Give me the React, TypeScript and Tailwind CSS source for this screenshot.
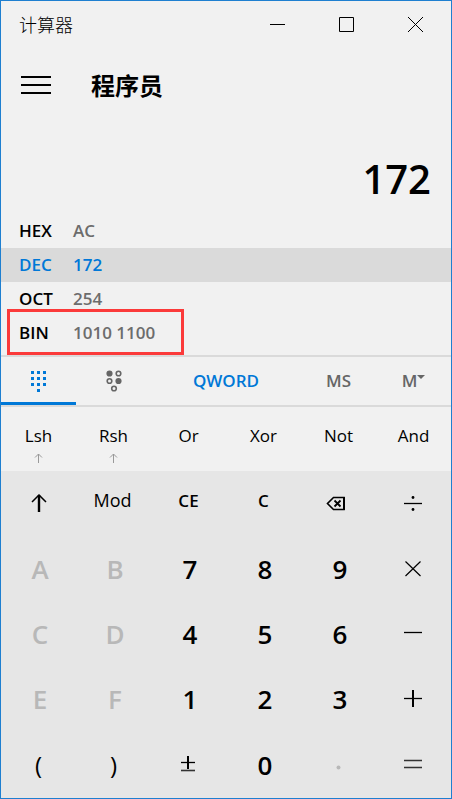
import type { ReactNode } from "react";

const SHIFTED = (
  <svg width="9" height="10" viewBox="0 0 9 10" fill="none" stroke="#999999" aria-hidden="true">
    <path d="M4.5 1v9M1 4.5l3.5-3.5 3.5 3.5" />
  </svg>
);

const RADIX = [
  { name: "HEX", value: "AC" },
  { name: "DEC", value: "172", active: true },
  { name: "OCT", value: "254" },
  { name: "BIN", value: "1010 1100", marked: true },
];

const BITWISE = [
  { name: "Lsh", shifted: true },
  { name: "Rsh", shifted: true },
  { name: "Or" },
  { name: "Xor" },
  { name: "Not" },
  { name: "And" },
];

type Key = { name: string; kind: "digit" | "off" | "command" | "word" | "paren" | "icon"; icon?: ReactNode };

function Icon({ children }: { children: ReactNode }) {
  return (
    <svg width="20" height="20" viewBox="0 0 20 20" fill="none" stroke="#000000" aria-hidden="true">
      {children}
    </svg>
  );
}

const ICONS: Record<string, ReactNode> = {
  Shift: (
    <Icon>
      <path d="M11 1v17" strokeWidth="2.4" />
      <path d="M4 8l7-7 7 7" strokeWidth="1.5" />
    </Icon>
  ),
  Backspace: (
    <svg width="24" height="20" viewBox="0 0 24 20" fill="none" stroke="#000000" aria-hidden="true">
      <path d="M7.5 3.5h10.5v12H7.5l-6-6z" strokeWidth="1.6" />
      <path d="M18 3v13" strokeWidth="2" />
      <path d="M8.5 6.5l6 6M14.5 6.5l-6 6" strokeWidth="1.8" />
    </svg>
  ),
  Divide: (
    <Icon>
      <path d="M1 9.5h18" strokeWidth="1.3" />
      <circle cx="10" cy="3.5" r="1.4" fill="#000000" stroke="none" />
      <circle cx="10" cy="15.5" r="1.4" fill="#000000" stroke="none" />
    </Icon>
  ),
  Multiply: (
    <Icon>
      <path d="M2.5 2.5l15 14.5M17.5 2.5L2.5 17" strokeWidth="1.2" />
    </Icon>
  ),
  Minus: (
    <Icon>
      <path d="M1 8.5h18" strokeWidth="1.3" />
    </Icon>
  ),
  Plus: (
    <Icon>
      <path d="M1 8.5h18" strokeWidth="1.3" />
      <path d="M10 0v17" strokeWidth="2" />
    </Icon>
  ),
  Equals: (
    <Icon>
      <path d="M1 5.5h18M1 12.5h18" stroke="#333333" strokeWidth="1.5" />
    </Icon>
  ),
  Negate: (
    <Icon>
      <path d="M3 7.5h14" strokeWidth="1.3" />
      <path d="M10 1v13" strokeWidth="2" />
      <path d="M3 15.5h14" stroke="#333333" strokeWidth="1.6" />
    </Icon>
  ),
  Decimal: (
    <Icon>
      <circle cx="10.5" cy="12.5" r="2" fill="#b8b8b8" stroke="none" />
    </Icon>
  ),
};

const KEYS: Key[] = [
  { name: "Shift", kind: "icon" },
  { name: "Mod", kind: "word" },
  { name: "CE", kind: "command" },
  { name: "C", kind: "command" },
  { name: "Backspace", kind: "icon" },
  { name: "Divide", kind: "icon" },
  { name: "A", kind: "off" },
  { name: "B", kind: "off" },
  { name: "7", kind: "digit" },
  { name: "8", kind: "digit" },
  { name: "9", kind: "digit" },
  { name: "Multiply", kind: "icon" },
  { name: "C", kind: "off" },
  { name: "D", kind: "off" },
  { name: "4", kind: "digit" },
  { name: "5", kind: "digit" },
  { name: "6", kind: "digit" },
  { name: "Minus", kind: "icon" },
  { name: "E", kind: "off" },
  { name: "F", kind: "off" },
  { name: "1", kind: "digit" },
  { name: "2", kind: "digit" },
  { name: "3", kind: "digit" },
  { name: "Plus", kind: "icon" },
  { name: "(", kind: "paren" },
  { name: ")", kind: "paren" },
  { name: "Negate", kind: "icon" },
  { name: "0", kind: "digit" },
  { name: "Decimal", kind: "icon" },
  { name: "Equals", kind: "icon" },
];

const KEY_STYLE = {
  digit: "pl-[3px] text-[26px] font-semibold text-black",
  off: "pl-[3px] text-[26px] font-semibold text-[#b8b8b8]",
  command: "pb-1.5 text-[17px] font-semibold text-black",
  word: "pr-0.5 pb-1.5 text-[18px] text-black",
  paren: "text-[24px] text-black",
  icon: "pr-0.5",
};

function TitleBar() {
  return (
    <header className="flex h-[46px] items-center pr-px pl-[18px]">
      <h1 className="flex-1 font-['Noto_Sans_CJK_SC',sans-serif] text-[18px] font-light">计算器</h1>
      <button type="button" aria-label="最小化" className="flex h-full w-[69px] items-center justify-center">
        <svg width="15" height="15" viewBox="0 0 15 15" stroke="#000000" aria-hidden="true">
          <path d="M0 7.5h15" />
        </svg>
      </button>
      <button type="button" aria-label="最大化" className="flex h-full w-[69px] items-center justify-center">
        <svg width="15" height="15" viewBox="0 0 15 15" fill="none" stroke="#000000" aria-hidden="true">
          <path d="M.5.5h14v14H.5z" />
        </svg>
      </button>
      <button type="button" aria-label="关闭" className="flex h-full w-[69px] items-center justify-center">
        <svg width="15" height="15" viewBox="0 0 15 15" stroke="#000000" aria-hidden="true">
          <path d="M0 0l15 15M15 0L0 15" />
        </svg>
      </button>
    </header>
  );
}

export default function App() {
  return (
    <main className="flex min-h-screen flex-col border border-[#1e7fd0] bg-[#f1f1f1] font-['Open_Sans','Noto_Sans','Noto_Sans_CJK_SC',sans-serif] text-black">
      <TitleBar />

      <div className="flex h-[76px] items-center gap-10 pl-5">
        <button type="button" aria-label="菜单">
          <svg width="30" height="20" viewBox="0 0 30 20" stroke="#000000" strokeWidth="2" aria-hidden="true">
            <path d="M0 2h30M0 10h30M0 18h30" />
          </svg>
        </button>
        <h2 className="font-['Noto_Sans_CJK_SC',sans-serif] text-[24px] font-bold">程序员</h2>
      </div>

      <output className="flex h-[91px] items-center justify-end px-5 pt-5 text-[40px] font-semibold">172</output>

      <div className="flex flex-col pb-[5px]">
        {RADIX.map((row) => (
          <button
            key={row.name}
            type="button"
            aria-pressed={!!row.active}
            className={`relative flex h-[34px] items-center pl-[18px] text-left text-[17px] font-semibold ${
              row.active ? "bg-[#dadada] text-[#0078d7]" : ""
            }`}
          >
            <span className="w-[54px]">{row.name}</span>
            <span className={row.active ? "" : "text-[#6c6c6c]"}>{row.value}</span>
            {row.marked && (
              <span className="absolute -bottom-[5px] left-[6px] h-[46px] w-[177px] border-3 border-[#fb3a3a]" />
            )}
          </button>
        ))}
      </div>

      <div className="grid h-[52px] grid-cols-6 border-y-2 border-[#dadada] text-[17px] font-semibold">
        <button type="button" aria-label="键盘" className="flex items-center justify-center border-b-3 border-[#0078d7] pt-1">
          <svg width="15" height="21" viewBox="0 0 15 21" fill="#0078d7" aria-hidden="true">
            <path d="M0 0h3v3H0zM6 0h3v3H6zM12 0h3v3h-3zM0 6h3v3H0zM6 6h3v3H6zM12 6h3v3h-3zM0 12h3v3H0zM6 12h3v3H6zM12 12h3v3h-3zM6 18h3v3H6z" />
          </svg>
        </button>
        <button type="button" aria-label="位切换" className="flex items-center justify-center">
          <svg width="16" height="22" viewBox="0 0 16 22" fill="none" stroke="#666666" strokeWidth="1.6" aria-hidden="true">
            <circle cx="3.5" cy="3.5" r="2.3" fill="#666666" />
            <circle cx="12.5" cy="3.5" r="2.3" />
            <circle cx="3.5" cy="11" r="2.3" />
            <circle cx="12.5" cy="11" r="2.3" fill="#666666" />
            <circle cx="8" cy="18.5" r="2.3" />
          </svg>
        </button>
        <button type="button" className="col-span-2 text-[#0078d7]">
          QWORD
        </button>
        <button type="button" className="text-[#666666]">
          MS
        </button>
        <button type="button" className="flex items-center justify-center text-[#666666]">
          M
          <svg width="8" height="14" viewBox="0 0 8 14" fill="#666666" aria-hidden="true">
            <path d="M0 1h8L4 5z" />
          </svg>
        </button>
      </div>

      <div className="grid h-16 grid-cols-6 text-[17px]">
        {BITWISE.map((key) => (
          <button key={key.name} type="button" className="flex flex-col items-center gap-1 pt-4">
            <span className="leading-[26px]">{key.name}</span>
            {key.shifted && SHIFTED}
          </button>
        ))}
      </div>

      <div className="grid flex-1 auto-rows-fr grid-cols-6 bg-[#e6e6e6]">
        {KEYS.map((key) => (
          <button
            key={key.kind + key.name}
            type="button"
            aria-label={key.kind === "icon" ? key.name : undefined}
            disabled={key.kind === "off" || key.name === "Decimal"}
            className={`flex min-h-12 items-center justify-center ${KEY_STYLE[key.kind]}`}
          >
            {key.kind === "icon" ? ICONS[key.name] : key.name}
          </button>
        ))}
      </div>
    </main>
  );
}
